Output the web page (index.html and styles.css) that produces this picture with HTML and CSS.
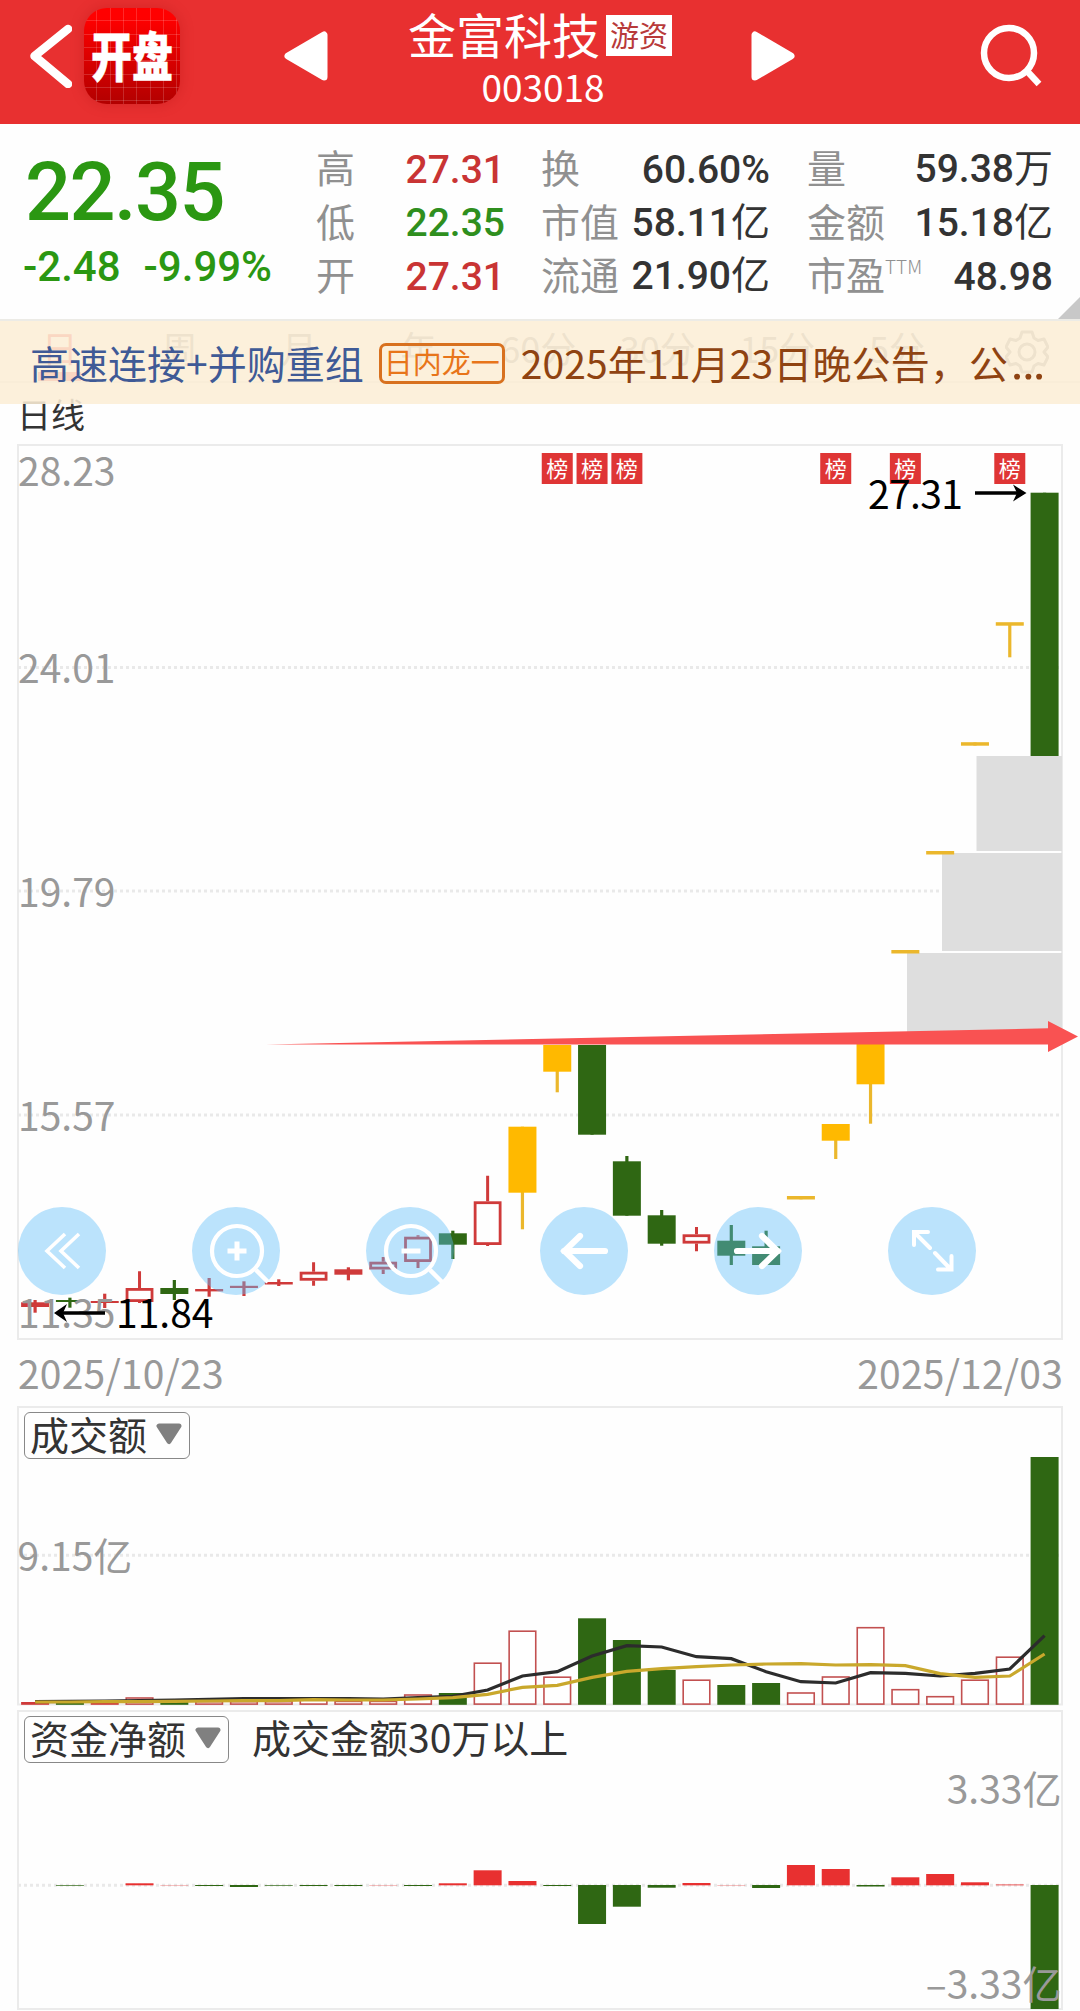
FILE: index.html
```
<!DOCTYPE html>
<html lang="zh-CN">
<head>
<meta charset="utf-8">
<title>金富科技 003018</title>
<link rel="stylesheet" href="styles.css">
</head>
<body>
<header class="topbar">
  <svg class="back" width="44" height="66" viewBox="0 0 44 66"><path d="M40 7 L6.500 34 L40 62" fill="none" stroke="#fff" stroke-width="8.5" stroke-linecap="round" stroke-linejoin="round"/></svg>
  <div class="logo"><span>开盘</span></div>
  <svg class="prev" width="44" height="50" viewBox="0 0 44 50"><path d="M4 25 L40 4 V46 Z" fill="#fff" stroke="#fff" stroke-width="7" stroke-linejoin="round"/></svg>
  <div class="stock">
    <div class="name">金富科技<span class="tag">游资</span></div>
    <div class="code">003018</div>
  </div>
  <svg class="next" width="44" height="50" viewBox="0 0 44 50"><path d="M40 25 L4 4 V46 Z" fill="#fff" stroke="#fff" stroke-width="7" stroke-linejoin="round"/></svg>
  <svg class="search" width="64" height="64" viewBox="0 0 64 64"><circle cx="29" cy="29" r="25" fill="none" stroke="#fff" stroke-width="6.5"/><path d="M47 47 L59 60" stroke="#fff" stroke-width="6.5"/></svg>
</header>

<section class="quote">
  <div class="last">
    <div class="price">22.35</div>
    <div class="change"><span>-2.48</span><span>-9.99%</span></div>
  </div>
  <dl class="stats s1">
    <dt>高</dt><dd class="up">27.31</dd>
    <dt>低</dt><dd class="down">22.35</dd>
    <dt>开</dt><dd class="up">27.31</dd>
  </dl>
  <dl class="stats s2">
    <dt>换</dt><dd>60.60%</dd>
    <dt>市值</dt><dd>58.11<i>亿</i></dd>
    <dt>流通</dt><dd>21.90<i>亿</i></dd>
  </dl>
  <dl class="stats s3">
    <dt>量</dt><dd>59.38<i>万</i></dd>
    <dt>金额</dt><dd>15.18<i>亿</i></dd>
    <dt>市盈<sup>TTM</sup></dt><dd>48.98</dd>
  </dl>
  <div class="corner"></div>
</section>

<div class="period">
  <nav class="tabs">
    <span class="on">日</span><span>周</span><span>月</span><span>年</span><span>60分</span><span>30分</span><span>15分</span><span>5分</span>
    <svg width="44" height="44" viewBox="-22 -22 44 44" fill="none" stroke="#888" stroke-width="3"><circle r="8"/><path d="M-5 -20 H5 L7 -14 L11 -11.5 L17 -13 L21 -5 L17 0 L21 5 L17 13 L11 11.5 L7 14 L5 20 H-5 L-7 14 L-11 11.5 L-17 13 L-21 5 L-17 0 L-21 -5 L-17 -13 L-11 -11.5 L-7 -14 Z" stroke-linejoin="round"/></svg>
  </nav>
  <div class="kind">日线</div>
  <div class="notice"><span class="topic">高速连接+并购重组</span><span class="rank">日内龙一</span><span class="news">2025年11月23日晚公告，公<b>…</b></span></div>
</div>

<section class="kline">
  <svg id="kline" width="1080" height="896" viewBox="0 444 1080 896"></svg>
  <div class="tools">
    <button><svg viewBox="-44 -44 88 88"><path d="M3 -17 L-15 0 L3 17 M17 -17 L-1 0 L17 17" stroke-width="3.6"/></svg></button>
    <button><svg viewBox="-44 -44 88 88"><circle cx="1" cy="0" r="25" stroke-width="4.2"/><path d="M20 19 L32 31" stroke-width="4.5"/><path d="M-8.500 0 H10.500 M1 -9.500 V9.500" stroke-width="5"/></svg></button>
    <button><svg viewBox="-44 -44 88 88"><circle cx="1" cy="0" r="25" stroke-width="4.2"/><path d="M20 19 L32 31" stroke-width="4.500"/><path d="M-8.500 0 H10.500" stroke-width="5"/></svg></button>
    <button><svg viewBox="-44 -44 88 88"><path d="M21 0 H-20 M-4 -15 L-19.500 0 L-4 15" stroke-width="6.200" stroke-linecap="round"/></svg></button>
    <button><svg viewBox="-44 -44 88 88"><path d="M-21 0 H20 M4 -15 L19.500 0 L4 15" stroke-width="6.200" stroke-linecap="round"/></svg></button>
    <button><svg viewBox="-44 -44 88 88"><path d="M-2 -3 L-18 -19 M-4 -19 H-18 V-6 M3 2 L19 18.500 M6 18.500 H19.500 V5" stroke-width="4" stroke-linecap="round"/></svg></button>
  </div>
</section>
<div class="dates"><span>2025/10/23</span><span>2025/12/03</span></div>

<section class="pane volume">
  <svg id="volume" width="1080" height="300" viewBox="0 1406 1080 300"></svg>
  <div class="bar"><span class="select">成交额<svg width="26" height="22" viewBox="0 0 26 22"><path d="M3 3 H23 L13 18.500 Z"/></svg></span></div>
</section>
<section class="pane funds">
  <svg id="funds" width="1080" height="301" viewBox="0 1710 1080 301"></svg>
  <div class="bar"><span class="select">资金净额<svg width="26" height="22" viewBox="0 0 26 22"><path d="M3 3 H23 L13 18.500 Z"/></svg></span><span>成交金额30万以上</span></div>
</section>
<script src="charts.js"></script>
</body>
</html>
```
FILE: styles.css
```
* { box-sizing: border-box; }
body {
  margin: 0;
  width: 1080px;
  background: #fefefe;
  color: #333;
  font-family: "Noto Sans CJK SC", sans-serif;
  font-size: 39px;
  line-height: 1;
}
svg { display: block; flex: none; }

.topbar {
  display: flex;
  height: 124px;
  padding-left: 28px;
  background: #e83030;
  color: #fff;
}
.back { margin-top: 22px; }
.logo {
  display: flex;
  align-items: center;
  justify-content: center;
  width: 96px;
  height: 96px;
  margin: 8px 0 0 12px;
  border-radius: 23px;
  background:
    repeating-linear-gradient(90deg, transparent 0 12.300px, rgba(255, 255, 255, .16) 12.300px 13.300px),
    repeating-linear-gradient(transparent 0 12.300px, rgba(255, 255, 255, .16) 12.300px 13.300px),
    linear-gradient(#f00 10%, #b20000);
  box-shadow: 0 0 14px rgba(150, 0, 0, .25);
  font-size: 41px;
  font-weight: 900;
  -webkit-text-stroke: .400px #fff;
}
.logo span { margin-top: -4px; transform: scaleY(1.3); }
.prev { margin: 31px 0 0 104px; }
.stock { width: 266px; margin-left: 80px; }
.name { display: flex; height: 68px; padding-top: 9px; font-size: 48px; white-space: nowrap; }
.tag {
  width: 66px;
  height: 41px;
  margin: 6px 0 0 6px;
  background: #fff;
  color: #b83a3a;
  font-size: 29px;
  line-height: 39px;
  text-align: center;
}
.code { width: 270px; font-size: 37px; text-align: center; }
.next { margin: 31px 0 0 77px; }
.search { margin: 24px 0 0 185px; }

.quote {
  position: relative;
  display: flex;
  height: 195px;
}
.last { width: 316px; padding: 27px 0 0 25px; color: #2b9712; font-family: Roboto, sans-serif; font-weight: 500; }
.price { font-size: 81px; letter-spacing: -1.500px; line-height: 84px; }
.change { display: flex; gap: 23px; margin: 10px 0 0 -2px; font-size: 42px; line-height: 44px; white-space: nowrap; }
.stats {
  display: grid;
  grid-template-columns: auto 1fr;
  grid-auto-rows: 53.500px;
  align-items: center;
  margin: 16px 0 0;
  white-space: nowrap;
}
.s1 { width: 189px; }
.s2 { width: 229px; margin-left: 36px; }
.s3 { width: 246px; margin-left: 37px; grid-template-columns: 80px 166px; }
dt { color: #909090; }
dd { margin: 0; padding-top: 7px; text-align: right; font-family: Roboto, "Noto Sans CJK SC", sans-serif; font-weight: 500; }
dd:has(i) { padding-top: 2px; }
dd i { font: 400 39px/1 "Noto Sans CJK SC", sans-serif; }
sup { font-size: 19px; font-weight: 300; vertical-align: 16px; line-height: 0; }
.up { color: #c93434; }
.down { color: #2f8f1e; }
.corner {
  position: absolute;
  right: 0;
  bottom: 0;
  border-left: 22px solid transparent;
  border-bottom: 22px solid #c8c8c8;
}

.period { position: relative; height: 125px; }
.tabs {
  display: flex;
  height: 64px;
  border-bottom: 2px solid #e4e4e4;
  color: #888;
  font-size: 36px;
}
.tabs span { width: 119.600px; padding-top: 10px; text-align: center; }
.tabs .on { color: #e83030; }
.tabs .on::after { content: ""; display: block; width: 43px; height: 9px; margin: 7px auto 0; background: #e83030; }
.tabs svg { margin: 11px 0 0 48px; }
.kind { padding: 14px 0 0 17px; font-size: 34px; }
.notice {
  position: absolute;
  inset: 0 0 auto;
  display: flex;
  align-items: center;
  height: 85px;
  border-top: 2px solid #ecebe6;
  padding-left: 30px;
  background: rgba(252, 238, 214, .88);
  white-space: nowrap;
}
.topic { color: #3f5a96; }
.rank {
  width: 126px;
  height: 41px;
  margin: 2px 16px 0 15px;
  border: 3px solid #d8711f;
  border-radius: 7px;
  color: #e8751a;
  font-size: 29px;
  line-height: 31px;
  text-align: center;
}
.news { color: #8f4312; letter-spacing: .150px; }
.news b { margin-left: 2px; font-family: Roboto, sans-serif; font-weight: 400; font-size: 53px; line-height: 0; }

.kline { position: relative; height: 896px; }
.tools {
  position: absolute;
  left: 18px;
  top: 763px;
  display: flex;
  gap: 86px;
}
.tools button {
  width: 88px;
  height: 88px;
  padding: 0;
  border: 0;
  border-radius: 50%;
  background: rgba(94, 190, 251, .415);
}
.tools svg { width: 88px; height: 88px; fill: none; stroke: #fff; }
.dates {
  display: flex;
  justify-content: space-between;
  height: 66px;
  padding: 13px 17px 0 18px;
  color: #999;
  letter-spacing: .200px;
}

.pane { display: grid; }
.pane > * { grid-area: 1 / 1; }
.volume { height: 304px; }
.funds { height: 301px; }
.bar { display: flex; align-items: flex-start; gap: 23px; padding: 6px 0 0 24px; line-height: 41px; }
.select {
  display: flex;
  align-items: flex-start;
  gap: 9px;
  height: 47px;
  padding: 0 7px 0 5px;
  border: 1px solid #888;
  border-radius: 6px;
}
.select svg { margin-top: 10px; }
.select path { fill: #808080; stroke: #808080; stroke-width: 5; stroke-linejoin: round; }

.axis { fill: #999; }
.mark { fill: #000; }
.flag { fill: #fff; font-size: 22px; text-anchor: middle; }
.end { text-anchor: end; }
```
FILE: charts.js
```
const RED = '#cf3a3a', GREEN = '#2f6713', GOLD = '#ffb900', LINE = '#ebb72c';
const cx = i => 35.1 + 34.81 * i;
const rect = (x, y, w, h, a) => `<rect x="${x}" y="${y}" width="${w}" height="${h}" ${a}/>`;
const grid = y => `<path d="M18 ${y}H1062" stroke="#e9e9e9" stroke-width="3" stroke-dasharray="3 3"/>`;
const frame = (y, h) => rect(18, y, 1044, h, 'fill="none" stroke="#ebebeb" stroke-width="2"');

// Candles: type, body top, body bottom, high, low.
// r = hollow red, f = filled red, g = green, y = limit-up gold, l = one-price gold
const candles = [
  ['f', 1302.3, 1307, 1300, 1312.7], ['g', 1300, 1302, 1297.7, 1307.7], ['f', 1301, 1303, 1293.7, 1308],
  ['r', 1288, 1302, 1271.3, 1303], ['g', 1288, 1294, 1280, 1300], ['f', 1289, 1291.4, 1278, 1296.7],
  ['f', 1285.8, 1288, 1281.3, 1296], ['f', 1282, 1284.5, 1279.3, 1286], ['r', 1271.7, 1280.7, 1262.3, 1285.7],
  ['f', 1269.3, 1274.7, 1267.3, 1280.3], ['r', 1261.7, 1269.5, 1257, 1274], ['r', 1236.7, 1262, 1235.3, 1268],
  ['g', 1233.3, 1244.7, 1230.7, 1259], ['r', 1201.3, 1245, 1175.7, 1246], ['y', 1126.7, 1192.7, 1126.7, 1229.3],
  ['y', 1045, 1071.7, 1045, 1092.3], ['g', 1045, 1134.7, 1045, 1134.7], ['g', 1161.3, 1215.7, 1156, 1215.7],
  ['g', 1215.3, 1243.7, 1210, 1245.7], ['r', 1234.3, 1243.6, 1227, 1251.3], ['g', 1240.7, 1255.7, 1225, 1265],
  ['g', 1246.3, 1265, 1230.7, 1265], ['l', 1196, 1199.5, 1196.3, 1199.3], ['y', 1124, 1140.7, 1124, 1159],
  ['y', 1040, 1084.3, 1045, 1123.7], ['l', 950, 953.5, 950, 953], ['l', 851, 854.5, 851, 854],
  ['l', 742.2, 745.7, 742.5, 745.5], ['l', 622.2, 625.7, 624, 657.3], ['g', 492.7, 756, 492.7, 756]
];
let k = frame(445, 894) + grid(667.5) + grid(891) + grid(1115);
k += rect(976.5, 756, 85.5, 95, 'fill="#dedede"') + rect(942, 853, 120, 98, 'fill="#dedede"') + rect(907, 953, 155, 85, 'fill="#dedede"');
candles.forEach(([t, top, bot, hi, lo], i) => {
  const c = cx(i), wick = { r: RED, f: RED, g: GREEN, y: LINE, l: LINE }[t];
  if (t === 'r') {
    k += `<path d="M${c} ${hi}V${top}M${c} ${bot}V${lo}" stroke="${wick}" stroke-width="3"/>`;
    k += rect(c - 12.5, top + 1.4, 25, bot - top - 2.8, `fill="none" stroke="${RED}" stroke-width="2.8"`);
  } else {
    k += `<path d="M${c} ${hi}V${lo}" stroke="${wick}" stroke-width="3.200"/>`;
    k += rect(c - 14, top, 28, bot - top, `fill="${t === 'y' ? GOLD : wick}"`);
  }
});
[15, 16, 17, 23, 25, 28].forEach(i => {
  k += rect(cx(i) - 15.5, 453, 31, 31, 'fill="#df3535"') + `<text class="flag" x="${cx(i)}" y="477">榜</text>`;
});
k += '<path d="M266 1044.5L1048 1028.3V1021L1078 1036.5L1048 1052V1044.5Z" fill="#f95252"/>';
[['28.23', 485.5], ['24.01', 683], ['19.79', 907], ['15.57', 1131], ['11.35', 1328]].forEach(([s, y]) => {
  k += `<text class="axis" x="18" y="${y}">${s}</text>`;
});
k += '<text class="mark" x="116" y="1328">11.84</text><text class="mark" x="868" y="508.500" textLength="95">27.31</text>';
k += '<path d="M105 1313H58M975 493H1023" stroke="#000" stroke-width="3.6"/>';
k += '<path d="M54 1313L67 1304L63 1313L67 1322ZM1026.500 493L1013 484.500L1017 493L1013 501.500Z"/>';
document.getElementById('kline').innerHTML = k;

// Turnover bars: type and top edge, with two moving averages
const turnover = [
  ['f', 1702], ['g', 1702.7], ['f', 1702.7], ['r', 1697.3], ['g', 1701.7], ['r', 1701], ['r', 1701], ['r', 1701],
  ['r', 1697.5], ['r', 1700.7], ['r', 1700.7], ['r', 1694.3], ['g', 1693], ['r', 1662.5], ['r', 1630.5], ['r', 1676.5],
  ['g', 1618.3], ['g', 1640], ['g', 1670], ['r', 1679.5], ['g', 1685], ['g', 1683], ['r', 1692.3], ['r', 1676.3],
  ['r', 1627], ['r', 1689], ['r', 1696], ['r', 1679.5], ['r', 1656.5], ['g', 1457]
];
const fast = [905, 904, 903, 902, 900, 898, 896, 896, 896, 896, 897, 893, 889, 870, 828, 815, 768, 737, 741, 770, 776, 815, 845, 849, 818, 820, 828, 820, 807, 707];
const slow = [906, 906, 905, 905, 904, 903, 902, 902, 899, 900, 900, 897, 893, 883, 862, 856, 832, 814, 806, 800, 795, 792, 791, 795, 794, 797, 821, 832, 828, 762];
const curve = (pts, color) => `<polyline fill="none" stroke="${color}" stroke-width="3.200" points="${pts.map((v, i) => cx(i) + ',' + (1400 + v / 3)).join(' ')}"/>`;
let v = frame(1407, 297.5) + grid(1555.3);
turnover.forEach(([t, top], i) => {
  const x = cx(i) - 14, h = 1704.8 - top;
  v += t === 'r' ? rect(x + .7, top + .7, 26.6, h - 1.4, 'fill="#fff" stroke="#c25050" stroke-width="1.6"')
                 : rect(x, top, 28, h, `fill="${t === 'g' ? GREEN : RED}"`);
});
v += curve(fast, '#2c2c2c') + curve(slow, '#c9a82c') + '<text class="axis" x="17.500" y="1571">9.15亿</text>';
document.getElementById('volume').innerHTML = v;

// Net inflow per day in pixels, positive is up
const net = [0, -.7, 0, 2, .3, -1, -2, -.7, -1, -1, .3, -1, 2, 15, 4.3, -1, -39, -21.7, -2.7, 2.3, .3, -3, 20.3, 16.3, -1.5, 8, 11.3, 3, .8, -124];
let f = frame(1711, 298) + grid(1885.3);
net.forEach((n, i) => {
  f += rect(cx(i) - 14, n > 0 ? 1885.3 - n : 1885, 28, Math.abs(n), `fill="${n > 0 ? '#e83030' : GREEN}"`);
});
f += '<text class="axis end" x="1061.500" y="1804">3.33亿</text><text class="axis end" x="1061.500" y="1998.500">–3.33亿</text>';
document.getElementById('funds').innerHTML = f;
```
